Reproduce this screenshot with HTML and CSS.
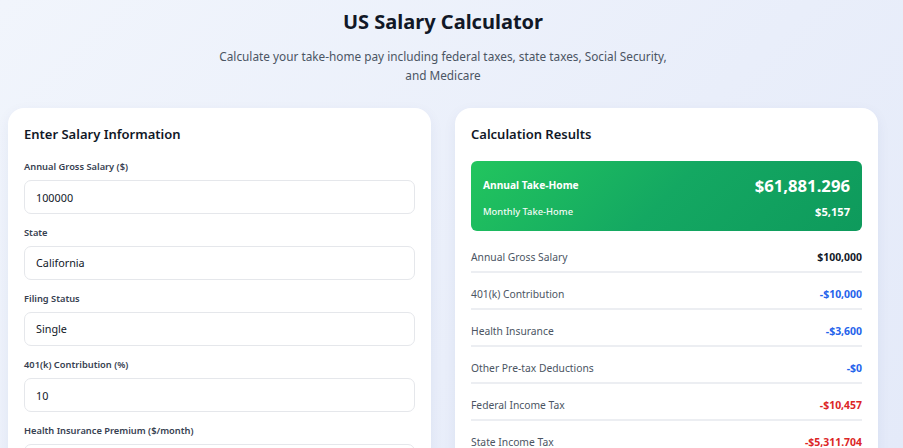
FILE: index.html
```html
<!DOCTYPE html>
<html lang="en">
<head>
<meta charset="utf-8">
<title>US Salary Calculator</title>
<link rel="stylesheet" href="styles.css">
</head>
<body>
<div class="page">
  <header class="hero">
    <h1 class="title">US Salary Calculator</h1>
    <p class="subtitle">Calculate your take-home pay including federal taxes, state taxes, Social Security, and Medicare</p>
  </header>
  <main class="grid">
    <section class="card">
      <h2 class="card-title">Enter Salary Information</h2>
      <div class="field">
        <label class="label">Annual Gross Salary ($)</label>
        <input class="input" type="text" value="100000">
      </div>
      <div class="field">
        <label class="label">State</label>
        <div class="input">California</div>
      </div>
      <div class="field">
        <label class="label">Filing Status</label>
        <div class="input">Single</div>
      </div>
      <div class="field">
        <label class="label">401(k) Contribution (%)</label>
        <input class="input" type="text" value="10">
      </div>
      <div class="field">
        <label class="label">Health Insurance Premium ($/month)</label>
        <input class="input" type="text" value="300">
      </div>
    </section>
    <section class="card">
      <h2 class="card-title">Calculation Results</h2>
      <div class="summary">
        <div class="summary-row">
          <span class="summary-label">Annual Take-Home</span>
          <span class="summary-value">$61,881.296</span>
        </div>
        <div class="summary-row small">
          <span class="summary-sublabel">Monthly Take-Home</span>
          <span class="summary-subvalue">$5,157</span>
        </div>
      </div>
      <div class="rows">
        <div class="row"><span class="row-label">Annual Gross Salary</span><span class="row-value">$100,000</span></div>
        <div class="row"><span class="row-label">401(k) Contribution</span><span class="row-value blue">-$10,000</span></div>
        <div class="row"><span class="row-label">Health Insurance</span><span class="row-value blue">-$3,600</span></div>
        <div class="row"><span class="row-label">Other Pre-tax Deductions</span><span class="row-value blue">-$0</span></div>
        <div class="row"><span class="row-label">Federal Income Tax</span><span class="row-value red">-$10,457</span></div>
        <div class="row"><span class="row-label">State Income Tax</span><span class="row-value red">-$5,311.704</span></div>
      </div>
    </section>
  </main>
</div>
</body>
</html>
```
FILE: styles.css
```css
* { box-sizing: border-box; }
html, body { margin: 0; padding: 0; }
body {
  font-family: "Noto Sans", "Open Sans", sans-serif;
  color: #111827;
  background: linear-gradient(135deg, #f1f5fc 0%, #e9eefa 60%, #e4eaf9 100%);
  height: 448px;
  overflow: hidden;
}
.page {
  width: 886px;
  padding: 0 8px;
}
.hero {
  text-align: center;
  padding-top: 8px;
}
.title {
  margin: 0;
  font-size: 20px;
  line-height: 28px;
  font-weight: 700;
  color: #111827;
}
.subtitle {
  margin: 11px auto 0;
  max-width: 462px;
  font-size: 11.8px;
  line-height: 19px;
  color: #4b5563;
}
.grid {
  display: grid;
  grid-template-columns: 1fr 1fr;
  gap: 24px;
  margin-top: 23px;
}
.card {
  background: #fff;
  border-radius: 16px;
  padding: 16px 16px;
  box-shadow: 0 4px 14px rgba(30, 50, 120, 0.06);
  height: 360px;
}
.card-title {
  margin: 0;
  font-size: 13px;
  line-height: 20px;
  font-weight: 600;
  color: #111827;
}
.field { margin-top: 15px; }
.field + .field { margin-top: 11px; }
.label {
  display: block;
  font-size: 9.3px;
  line-height: 16px;
  font-weight: 600;
  color: #374151;
  margin-bottom: 5px;
}
.input {
  display: block;
  width: 100%;
  height: 34px;
  padding: 0 11px;
  border: 1px solid #e5e7eb;
  border-radius: 7px;
  background: #fff;
  font-family: inherit;
  font-size: 10.8px;
  line-height: 32px;
  color: #111827;
  outline: none;
}
.summary {
  margin-top: 17px;
  border-radius: 6px;
  background: linear-gradient(135deg, #22c55e 0%, #14a862 50%, #0e9a5c 100%);
  padding: 10px 12px 10px;
  color: #fff;
}
.summary-row {
  display: flex;
  justify-content: space-between;
  align-items: center;
  height: 28px;
}
.summary-row.small { height: 20px; margin-top: 2px; }
.summary-label { font-size: 10.2px; font-weight: 700; }
.summary-value { font-size: 16.7px; font-weight: 700; }
.summary-sublabel { font-size: 9.4px; font-weight: 500; opacity: 0.95; }
.summary-subvalue { font-size: 11.1px; font-weight: 700; }
.rows { margin-top: 18px; }
.row {
  display: flex;
  justify-content: space-between;
  align-items: center;
  height: 24px;
  padding-bottom: 6px;
  line-height: 18px;
  border-bottom: 2px solid #eceef2;
  margin-bottom: 13px;
}
.row-label { font-size: 10.3px; color: #4b5563; }
.row-value { font-size: 10.45px; font-weight: 700; color: #111827; }
.row-value.blue { color: #2563eb; }
.row-value.red { color: #dc2626; }
```
